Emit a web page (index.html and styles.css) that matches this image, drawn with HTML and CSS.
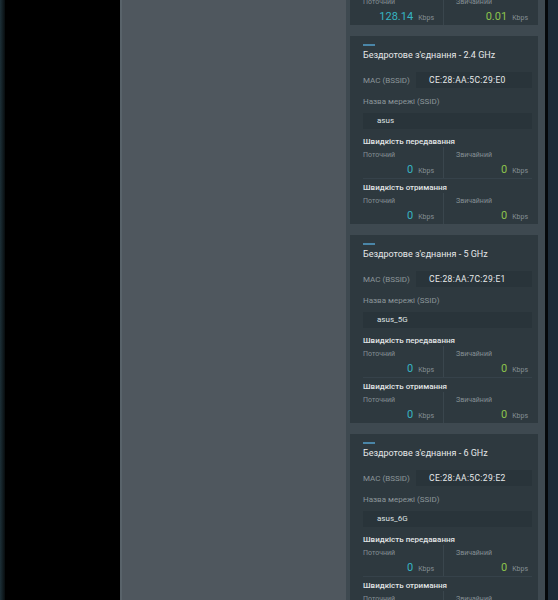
FILE: index.html
```html
<!DOCTYPE html>
<html lang="uk">
<head>
<meta charset="utf-8">
<link rel="stylesheet" href="styles.css">
</head>
<body>
<div class="app">
  <div class="edge-left"></div>
  <div class="void"></div>
  <main class="content"></main>
  <aside class="panel">
    <div class="cards">
      <section class="card">
        <div class="accent"></div>
        <h2 class="title">Дротове з'єднання</h2>
        <div class="mac-row"><span class="mac-label">MAC</span><span class="mac-value">CE:28:AA:5C:29:D8</span></div>
        <div class="field-label">IP</div>
        <div class="field-box">192.168.50.1</div>
        <div class="speed-heading">Швидкість передавання</div>
        <div class="speed-grid">
          <div class="col left"><div class="sub">Поточний</div><div class="val"><span class="num cur">0.00</span><span class="unit">Kbps</span></div></div>
          <div class="col right"><div class="sub">Звичайний</div><div class="val"><span class="num avg">0.00</span><span class="unit">Kbps</span></div></div>
        </div>
        <div class="speed-heading rx">Швидкість отримання</div>
        <div class="speed-grid last">
          <div class="col left"><div class="sub">Поточний</div><div class="val"><span class="num cur">128.14</span><span class="unit">Kbps</span></div></div>
          <div class="col right"><div class="sub">Звичайний</div><div class="val"><span class="num avg">0.01</span><span class="unit">Kbps</span></div></div>
        </div>
      </section>

      <section class="card">
        <div class="accent"></div>
        <h2 class="title">Бездротове з'єднання - 2.4 GHz</h2>
        <div class="mac-row"><span class="mac-label">MAC (BSSID)</span><span class="mac-value">CE:28:AA:5C:29:E0</span></div>
        <div class="field-label">Назва мережі (SSID)</div>
        <div class="field-box">asus</div>
        <div class="speed-heading">Швидкість передавання</div>
        <div class="speed-grid">
          <div class="col left"><div class="sub">Поточний</div><div class="val"><span class="num cur">0</span><span class="unit">Kbps</span></div></div>
          <div class="col right"><div class="sub">Звичайний</div><div class="val"><span class="num avg">0</span><span class="unit">Kbps</span></div></div>
        </div>
        <div class="speed-heading rx">Швидкість отримання</div>
        <div class="speed-grid last">
          <div class="col left"><div class="sub">Поточний</div><div class="val"><span class="num cur">0</span><span class="unit">Kbps</span></div></div>
          <div class="col right"><div class="sub">Звичайний</div><div class="val"><span class="num avg">0</span><span class="unit">Kbps</span></div></div>
        </div>
      </section>

      <section class="card">
        <div class="accent"></div>
        <h2 class="title">Бездротове з'єднання - 5 GHz</h2>
        <div class="mac-row"><span class="mac-label">MAC (BSSID)</span><span class="mac-value">CE:28:AA:7C:29:E1</span></div>
        <div class="field-label">Назва мережі (SSID)</div>
        <div class="field-box">asus_5G</div>
        <div class="speed-heading">Швидкість передавання</div>
        <div class="speed-grid">
          <div class="col left"><div class="sub">Поточний</div><div class="val"><span class="num cur">0</span><span class="unit">Kbps</span></div></div>
          <div class="col right"><div class="sub">Звичайний</div><div class="val"><span class="num avg">0</span><span class="unit">Kbps</span></div></div>
        </div>
        <div class="speed-heading rx">Швидкість отримання</div>
        <div class="speed-grid last">
          <div class="col left"><div class="sub">Поточний</div><div class="val"><span class="num cur">0</span><span class="unit">Kbps</span></div></div>
          <div class="col right"><div class="sub">Звичайний</div><div class="val"><span class="num avg">0</span><span class="unit">Kbps</span></div></div>
        </div>
      </section>

      <section class="card">
        <div class="accent"></div>
        <h2 class="title">Бездротове з'єднання - 6 GHz</h2>
        <div class="mac-row"><span class="mac-label">MAC (BSSID)</span><span class="mac-value">CE:28:AA:5C:29:E2</span></div>
        <div class="field-label">Назва мережі (SSID)</div>
        <div class="field-box">asus_6G</div>
        <div class="speed-heading">Швидкість передавання</div>
        <div class="speed-grid">
          <div class="col left"><div class="sub">Поточний</div><div class="val"><span class="num cur">0</span><span class="unit">Kbps</span></div></div>
          <div class="col right"><div class="sub">Звичайний</div><div class="val"><span class="num avg">0</span><span class="unit">Kbps</span></div></div>
        </div>
        <div class="speed-heading rx">Швидкість отримання</div>
        <div class="speed-grid last">
          <div class="col left"><div class="sub">Поточний</div><div class="val"><span class="num cur">0</span><span class="unit">Kbps</span></div></div>
          <div class="col right"><div class="sub">Звичайний</div><div class="val"><span class="num avg">0</span><span class="unit">Kbps</span></div></div>
        </div>
      </section>
    </div>
  </aside>
  <div class="gap-line"></div>
  <div class="edge-right"></div>
</div>
</body>
</html>
```

FILE: styles.css
```css
html, body {
  margin: 0;
  padding: 0;
  background: #000;
}
body {
  font-family: Roboto, "Noto Sans", sans-serif;
}
.app {
  display: flex;
  width: 558px;
  height: 600px;
  overflow: hidden;
}
.edge-left {
  width: 5px;
  flex: none;
  background: linear-gradient(to right, #1d3038, #070c0e);
}
.void {
  width: 115px;
  flex: none;
  background: #000;
}
.content {
  width: 224px;
  flex: none;
  background: #4f575e;
  border-left: 2px solid #59636a;
}
.panel {
  width: 199px;
  flex: none;
  box-sizing: border-box;
  padding: 0 7px 0 4px;
  background: #3e4950;
  overflow: hidden;
}
.cards {
  display: flex;
  flex-direction: column;
  gap: 11px;
  margin-top: -163px;
}
.card {
  height: 188px;
  box-sizing: border-box;
  padding: 8px 6px 0 13px;
  background: #2e393f;
  overflow: hidden;
}
.accent {
  width: 12px;
  height: 2px;
  background: #4a86a8;
}
.title {
  margin: 3px 0 0;
  font-size: 9px;
  line-height: 12px;
  font-weight: 400;
  color: #e6e8e9;
}
.mac-row {
  display: flex;
  align-items: center;
  height: 16px;
  margin-top: 11px;
}
.mac-label {
  width: 53px;
  flex: none;
  font-size: 8px;
  color: #8b9599;
}
.mac-value {
  flex: 1;
  height: 16px;
  line-height: 16px;
  padding-left: 13px;
  background: #29343a;
  font-size: 8.5px;
  letter-spacing: 0.35px;
  color: #e8eaeb;
}
.field-label {
  margin-top: 8px;
  font-size: 8px;
  line-height: 11px;
  color: #8b9599;
}
.field-box {
  margin-top: 6px;
  height: 16px;
  line-height: 16px;
  padding-left: 14px;
  background: #29343a;
  font-size: 8px;
  color: #dfe2e3;
}
.speed-heading {
  margin-top: 7px;
  font-size: 8px;
  line-height: 11px;
  font-weight: 500;
  color: #e2e5e6;
}
.speed-heading.rx {
  margin-top: 3px;
}
.speed-grid {
  display: grid;
  grid-template-columns: 81px 1fr;
  border-bottom: 1px solid #36424a;
}
.speed-grid.last {
  border-bottom-color: transparent;
}
.col {
  padding-top: 4px;
}
.col.left {
  border-right: 1px solid #3a464d;
  padding-right: 9px;
}
.col.right {
  padding-left: 12px;
  padding-right: 4px;
}
.sub {
  font-size: 7px;
  line-height: 9px;
  color: #858f94;
}
.val {
  display: flex;
  justify-content: flex-end;
  align-items: baseline;
  gap: 5px;
  height: 17px;
  line-height: 17px;
  margin-top: 1px;
}
.num {
  font-size: 11px;
}
.num.cur {
  color: #36b4c2;
}
.num.avg {
  color: #8cc34c;
}
.unit {
  font-size: 7px;
  color: #858f94;
}
.gap-line {
  width: 3px;
  flex: none;
  background: #05080a;
}
.edge-right {
  flex: 1;
  background: #1d2b37;
}
```
